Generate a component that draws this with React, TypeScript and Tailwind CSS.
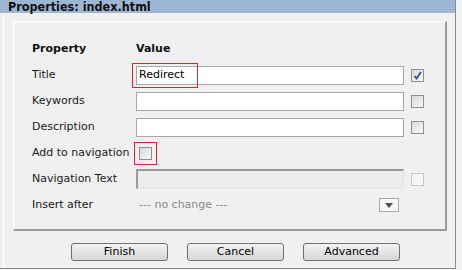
import type { ReactNode } from 'react'

/* Legacy CMS "Properties" dialog: blue caption, a sunken group box with the
   property grid, and three push buttons underneath. */

function Checkbox({ checked, disabled }: { checked?: boolean; disabled?: boolean }) {
  return (
    <div
      className={
        disabled
          ? 'relative h-[13px] w-[13px] border border-[#c8c8c8] bg-[#f4f4f4]'
          : 'relative h-[13px] w-[13px] border border-[#8e8f8f] bg-gradient-to-br from-[#d8d8d8] to-[#f8f8f8]'
      }
    >
      {checked && (
        <svg viewBox="0 0 11 11" className="absolute inset-0 h-[11px] w-[11px]">
          <path d="M2.5 6 L4.5 8.5 L9 2" fill="none" stroke="#3b4c8c" strokeWidth="1.8" />
        </svg>
      )}
    </div>
  )
}

function TextBox({ value }: { value?: string }) {
  return (
    <div className="flex h-[19px] w-[268px] items-center border border-[#a7a7a7] bg-white pl-[2px] text-[11px] text-black">
      {value}
    </div>
  )
}

function Row({ label, children }: { label: string; children: ReactNode }) {
  return (
    <div className="flex h-[26px] items-center">
      <div className="w-[104px] shrink-0 text-[11px] text-[#1a1a1a]">{label}</div>
      <div className="flex items-center">{children}</div>
    </div>
  )
}

function Button({ children }: { children: ReactNode }) {
  return (
    <div className="flex h-[18px] w-[97px] items-center justify-center rounded-[3px] border border-[#707070] bg-gradient-to-b from-[#f3f3f3] to-[#d6d6d6] text-[11px] text-black">
      {children}
    </div>
  )
}

export default function App() {
  return (
    <div
      className="h-[270px] w-[462px] overflow-hidden bg-[#f2f2f2]"
      style={{ fontFamily: '"DejaVu Sans", Verdana, sans-serif' }}
    >
      <div className="flex h-[269px] w-[456px] flex-col border-b border-r border-[#8a8a8a] bg-[#f0f0f0]">
        <div
          className="flex h-[13px] shrink-0 items-start bg-[#9db6d4] pl-[8px] text-[12.5px] font-bold leading-[13px] text-[#111]"
          style={{ fontFamily: '"DejaVu Sans Condensed", Tahoma, sans-serif' }}
        >
          <span>Properties: index.html</span>
        </div>

        <div className="ml-[3px] flex flex-1 flex-col border-l border-white pl-[9px] pt-[8px]">
          {/* group box */}
          <div className="h-[210px] w-[434px] border-b-2 border-l border-r-2 border-t border-b-[#9c9c9c] border-l-white border-r-[#9c9c9c] border-t-white pl-[18px] pt-[14px]">
            <div className="flex h-[26px] items-center text-[11px] font-bold text-[#111]">
              <div className="w-[104px]">Property</div>
              <div>Value</div>
            </div>

            <Row label="Title">
              <div className="relative">
                <TextBox value="Redirect" />
                <div className="absolute left-[-4px] top-[-3px] h-[25px] w-[66px] border border-[#e0202c]" />
              </div>
              <div className="ml-[7px]">
                <Checkbox checked />
              </div>
            </Row>

            <Row label="Keywords">
              <TextBox />
              <div className="ml-[7px]">
                <Checkbox />
              </div>
            </Row>

            <Row label="Description">
              <TextBox />
              <div className="ml-[7px]">
                <Checkbox />
              </div>
            </Row>

            <Row label="Add to navigation">
              <div className="relative ml-[3px]">
                <Checkbox />
                <div className="absolute left-[-5px] top-[-5px] h-[23px] w-[23px] border border-[#e0202c]" />
              </div>
            </Row>

            <Row label="Navigation Text">
              <div className="h-[20px] w-[268px] border-b border-l-2 border-r border-t-2 border-b-[#e4e4e4] border-l-[#999] border-r-[#e4e4e4] border-t-[#999] bg-[#ececec]" />
              <div className="ml-[7px]">
                <Checkbox disabled />
              </div>
            </Row>

            <Row label="Insert after">
              <div className="flex w-[263px] items-center justify-between">
                <span className="pl-[3px] text-[11px] text-[#8a8a8a]">--- no change ---</span>
                <div className="flex h-[14px] w-[20px] items-center justify-center border border-[#a9a9a9] bg-[#f6f6f6]">
                  <svg viewBox="0 0 8 5" className="h-[5px] w-[8px]">
                    <path d="M0 0 H8 L4 5 Z" fill="#4f4f4f" />
                  </svg>
                </div>
              </div>
            </Row>
          </div>

          <div className="flex gap-[19px] pl-[58px] pt-[12px]">
            <Button>Finish</Button>
            <Button>Cancel</Button>
            <Button>Advanced</Button>
          </div>
        </div>
      </div>
    </div>
  )
}
